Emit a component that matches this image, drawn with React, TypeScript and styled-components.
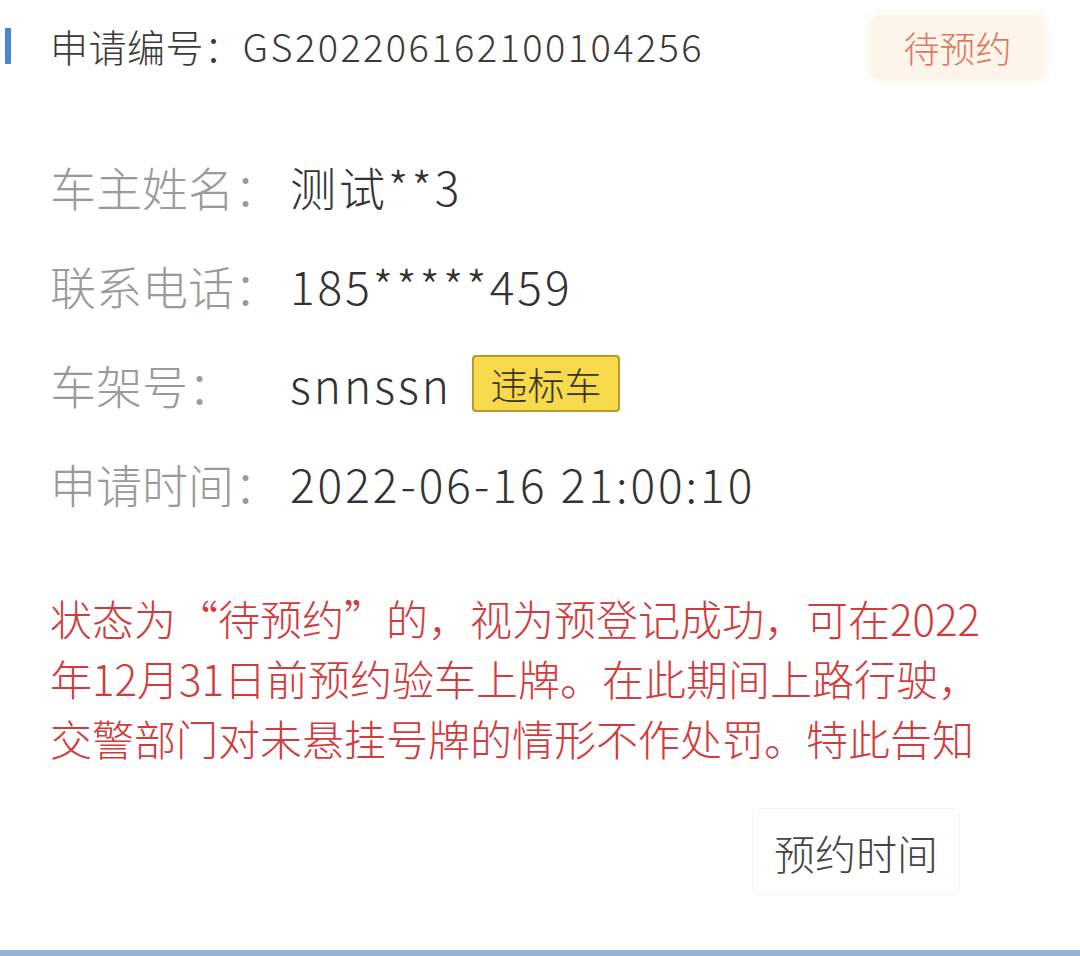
import styled, { createGlobalStyle } from "styled-components";

const GlobalStyle = createGlobalStyle`
  html, body {
    margin: 0;
    padding: 0;
    background: #ffffff;
  }
  body {
    font-family: "Noto Sans CJK SC", "Noto Sans", sans-serif;
    font-weight: 300;
  }
`;

const Page = styled.div`
  box-sizing: border-box;
  width: 1080px;
  height: 956px;
  display: flex;
  flex-direction: column;
  background: #fff;
  border-bottom: 6px solid #93b4d6;
`;

// header with request number + status badge

const Header = styled.div`
  height: 92px;
  display: flex;
  align-items: center;
  padding: 0 35px 0 5px;
`;

const Bar = styled.div`
  width: 6px;
  height: 36px;
  background: #4a86d8;
  border-radius: 1px;
  margin-right: 39px;
`;

const HeaderText = styled.div`
  flex: 1;
  font-size: 38px;
  color: #3a3a3a;
  line-height: 1;
  letter-spacing: 0.5px;
`;

const Code = styled.span`
  letter-spacing: 2.4px;
`;

const Badge = styled.div`
  width: 175px;
  height: 65px;
  display: flex;
  align-items: center;
  justify-content: center;
  background: #fdf5ea;
  border-radius: 10px;
  box-shadow: 0 0 10px 4px #fefaf4;
  color: #e07763;
  font-size: 36px;
  margin-top: 2px;
`;

// info rows

const Rows = styled.div`
  margin-top: 44px;
  padding-left: 50px;
  display: flex;
  flex-direction: column;
`;

const Row = styled.div`
  height: 99px;
  display: flex;
  align-items: center;
`;

const Label = styled.div`
  width: 240px;
  font-size: 46px;
  color: #9a9a9a;
  line-height: 1;
`;

const Value = styled.div`
  font-size: 46px;
  color: #333;
  line-height: 1;
  letter-spacing: 3px;
`;

const Tag = styled.span`
  display: inline-flex;
  align-items: center;
  justify-content: center;
  box-sizing: border-box;
  width: 148px;
  height: 57px;
  margin-left: 20px;
  background: #f7d94c;
  border: 2px solid #b59b2c;
  border-radius: 4px;
  font-size: 37px;
  color: #3a3320;
`;

// red notice

const Notice = styled.div`
  margin-top: 56px;
  padding-left: 50px;
  width: 960px;
  font-size: 42px;
  line-height: 60px;
  color: #d23b3b;
`;

// footer

const Footer = styled.div`
  margin-top: 40px;
  display: flex;
  justify-content: flex-end;
  padding-right: 120px;
`;

const Btn = styled.button`
  width: 208px;
  height: 87px;
  background: #fff;
  border: 1px solid #f3f3f3;
  border-radius: 6px;
  font-family: inherit;
  font-weight: inherit;
  font-size: 41px;
  color: #444;
  padding: 0;
`;

function App() {
  return (
    <Page>
      <GlobalStyle />
      <Header>
        <Bar />
        <HeaderText>
          申请编号：<Code>GS202206162100104256</Code>
        </HeaderText>
        <Badge>待预约</Badge>
      </Header>
      <Rows>
        <Row>
          <Label>车主姓名：</Label>
          <Value>测试**3</Value>
        </Row>
        <Row>
          <Label>联系电话：</Label>
          <Value>185*****459</Value>
        </Row>
        <Row>
          <Label>车架号：</Label>
          <Value>snnssn</Value>
          <Tag>违标车</Tag>
        </Row>
        <Row>
          <Label>申请时间：</Label>
          <Value>2022-06-16 21:00:10</Value>
        </Row>
      </Rows>
      <Notice>
        状态为“待预约”的，视为预登记成功，可在2022
        <br />
        年12月31日前预约验车上牌。在此期间上路行驶，
        <br />
        交警部门对未悬挂号牌的情形不作处罚。特此告知
      </Notice>
      <Footer>
        <Btn>预约时间</Btn>
      </Footer>
    </Page>
  );
}

export default App;
